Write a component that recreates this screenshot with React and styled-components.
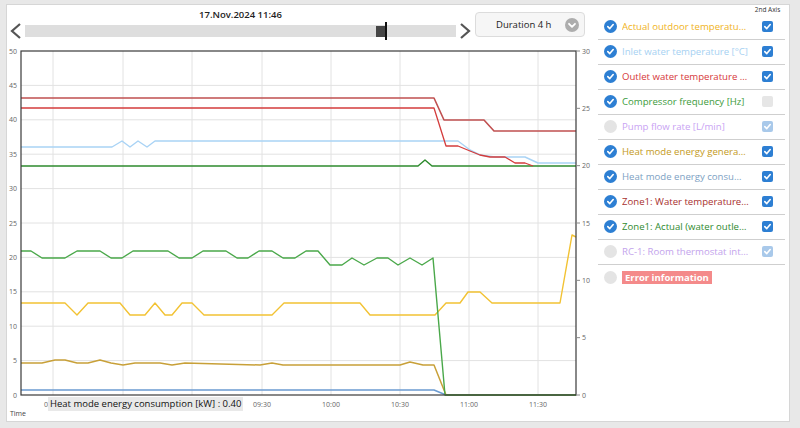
import React from "react";
import styled, { createGlobalStyle } from "styled-components";

const GlobalStyle = createGlobalStyle`
  html, body { margin: 0; padding: 0; background: #e8e8e8; }
  body { font-family: "Open Sans", "Noto Sans", sans-serif; }
`;

const Page = styled.div`
  width: 800px;
  height: 428px;
  box-sizing: border-box;
  padding: 4px 10px 6px 6px;
`;

const Panel = styled.div`
  height: 418px;
  box-sizing: border-box;
  border: 1px solid #d6d6d6;
  background: #fff;
  display: flex;
`;

const ChartColumn = styled.div`
  width: 590px;
  display: flex;
  flex-direction: column;
`;

const Header = styled.div`
  height: 39px;
  box-sizing: border-box;
  padding: 3px 0 0 2px;
  display: flex;
  align-items: flex-start;
`;

const TimeControl = styled.div`
  width: 463px;
  display: flex;
  flex-direction: column;
`;

const DateLabel = styled.div`
  height: 14px;
  line-height: 14px;
  text-align: center;
  font-size: 9.5px;
  font-weight: 600;
  color: #222;
`;

const SliderRow = styled.div`
  height: 18px;
  display: flex;
  align-items: center;
  gap: 2px;
`;

const NavButton = styled.div`
  width: 14px;
  height: 18px;
  display: flex;
  align-items: center;
  justify-content: center;
`;

const Track = styled.div`
  flex: 1;
  height: 12px;
  background: #dedede;
  position: relative;
`;

const Thumb = styled.div`
  position: absolute;
  left: 351px;
  top: 1px;
  width: 9px;
  height: 11px;
  background: #464646;
`;

const ThumbLine = styled.div`
  position: absolute;
  left: 360px;
  top: -3px;
  width: 2px;
  height: 18px;
  background: #111;
`;

const Dropdown = styled.div`
  margin: 4px 0 0 3px;
  width: 110px;
  height: 25px;
  box-sizing: border-box;
  border: 1px solid #dcdcdc;
  border-radius: 4px;
  background: #f6f6f6;
  display: flex;
  align-items: center;
  padding: 0 5px 0 20px;
  font-size: 9.5px;
  color: #222;
`;

const DropIcon = styled.svg`
  margin-left: auto;
  width: 14px;
  height: 14px;
`;

const ChartArea = styled.div`
  position: relative;
  flex: 1;
`;

const Tooltip = styled.div`
  position: absolute;
  left: 41px;
  top: 353px;
  height: 14px;
  line-height: 14px;
  padding: 0 2px;
  background: #e9e9e9;
  font-size: 9.5px;
  color: #111;
  white-space: nowrap;
`;

const Legend = styled.div`
  width: 192px;
  box-sizing: border-box;
  padding: 0 4px 0 1px;
  display: flex;
  flex-direction: column;
`;

const LegendHeader = styled.div`
  height: 10px;
  display: grid;
  grid-template-columns: 24px 127px 13px 11px;
`;

const AxisTitleCell = styled.div`
  grid-column: 4;
  display: flex;
  justify-content: center;
  white-space: nowrap;
  font-size: 6.5px;
  line-height: 10px;
  color: #333;
`;

const Row = styled.div`
  height: 25px;
  box-sizing: border-box;
  padding-bottom: 1px;
  border-bottom: ${(p) => (p.$last ? "none" : "1px solid #cfcfcf")};
  display: grid;
  grid-template-columns: 24px 127px 13px 11px;
  align-items: center;
`;

const IconCell = styled.div`
  display: flex;
  justify-content: center;
`;

const Dot = styled.div`
  width: 13px;
  height: 13px;
  border-radius: 50%;
  background: ${(p) => (p.$on ? "#2d7fd3" : "#e4e4e4")};
  display: flex;
  align-items: center;
  justify-content: center;
`;

const Label = styled.div`
  font-size: 9.6px;
  color: ${(p) => p.$color};
  white-space: nowrap;
  overflow: hidden;
  text-overflow: ellipsis;
`;

const ErrorBadge = styled.span`
  justify-self: start;
  background: #f48a8a;
  color: #fff;
  font-weight: 700;
  font-size: 9.5px;
  line-height: 13px;
  padding: 0 3px;
  white-space: nowrap;
`;

const Box = styled.div`
  grid-column: 4;
  width: 11px;
  height: 11px;
  border-radius: 2px;
  background: ${(p) =>
    p.$state === "on" ? "#2d7fd3" : p.$state === "dis" ? "#a9c9ea" : "#e6e6e6"};
  display: flex;
  align-items: center;
  justify-content: center;
`;

const CheckMark = ({ size = 9 }) => (
  <svg width={size} height={size} viewBox="0 0 10 10">
    <polyline points="2,5.2 4.2,7.3 8,2.8" fill="none" stroke="#fff" strokeWidth="1.8" strokeLinecap="round" strokeLinejoin="round" />
  </svg>
);

const Chevron = ({ dir }) => (
  <svg width="12" height="18" viewBox="0 0 12 18">
    <polyline
      points={dir === "left" ? "10,2 2,9 10,16" : "2,2 10,9 2,16"}
      fill="none"
      stroke="#555"
      strokeWidth="2.2"
    />
  </svg>
);

const legendItems = [
  { label: "Actual outdoor temperature [°C]", color: "#f0b323", on: true, box: "on" },
  { label: "Inlet water temperature [°C]", color: "#a6d1f2", on: true, box: "on" },
  { label: "Outlet water temperature [°C]", color: "#d6383a", on: true, box: "on" },
  { label: "Compressor frequency [Hz]", color: "#3c9b3c", on: true, box: "off" },
  { label: "Pump flow rate [L/min]", color: "#c9a3f3", on: false, box: "dis" },
  { label: "Heat mode energy generation [kW]", color: "#c49a22", on: true, box: "on" },
  { label: "Heat mode energy consumption [kW]", color: "#7d9fc3", on: true, box: "on" },
  { label: "Zone1: Water temperature target [°C]", color: "#a8302e", on: true, box: "on" },
  { label: "Zone1: Actual (water outlet) temperature [°C]", color: "#2f8a2f", on: true, box: "on" },
  { label: "RC-1: Room thermostat internal temperature [°C]", color: "#c3a3ec", on: false, box: "dis" },
];

const P = (arr) => arr.map((p) => p.join(",")).join(" ");

const series = [
  { color: "#6b9bd1", w: 1.5, pts: [[21, 390], [434, 390], [446, 395], [576, 395]] },
  {
    color: "#c8a038",
    w: 1.5,
    pts: [[21, 363], [42, 363], [55, 360], [65, 360], [77, 363], [88, 363], [100, 360], [111, 363], [123, 365], [135, 363], [160, 363], [172, 365], [185, 363], [260, 365], [272, 363], [283, 365], [400, 365], [410, 362], [423, 365], [434, 365], [446, 395], [576, 395]],
  },
  {
    color: "#f2c233",
    w: 1.4,
    pts: [[21, 303], [65, 303], [77, 315], [88, 303], [120, 303], [130, 315], [145, 315], [155, 303], [165, 315], [172, 315], [182, 303], [192, 303], [204, 315], [272, 315], [284, 303], [360, 303], [370, 315], [435, 315], [446, 303], [460, 303], [468, 292], [480, 292], [492, 303], [560, 303], [572, 235], [576, 237]],
  },
  {
    color: "#4aa84a",
    w: 1.4,
    pts: [[21, 251], [31, 251], [42, 258], [65, 258], [77, 251], [100, 251], [111, 258], [122, 258], [133, 251], [168, 251], [179, 258], [192, 258], [203, 251], [226, 251], [237, 258], [248, 258], [259, 251], [272, 251], [283, 258], [295, 258], [306, 251], [318, 251], [330, 265], [342, 265], [352, 258], [364, 265], [377, 258], [388, 258], [398, 265], [410, 258], [422, 265], [433, 258], [445, 395], [576, 395]],
  },
  { color: "#2e8b2e", w: 1.5, pts: [[21, 166], [418, 166], [425, 160], [432, 166], [576, 166]] },
  {
    color: "#a9d3f5",
    w: 1.4,
    pts: [[21, 147], [112, 147], [122, 141], [130, 147], [138, 141], [147, 147], [155, 141], [458, 141], [470, 150], [480, 155], [495, 157], [525, 157], [538, 163], [576, 163]],
  },
  {
    color: "#d43c3c",
    w: 1.3,
    pts: [[21, 108], [434, 108], [446, 146], [458, 146], [470, 151], [480, 155], [490, 157], [505, 157], [515, 163], [525, 163], [533, 166]],
  },
  { color: "#c05050", w: 1.6, pts: [[21, 98], [434, 98], [444, 120], [484, 120], [494, 131], [576, 131]] },
];

const gridX = [53, 123, 192, 262, 331, 400, 469, 538];
const xLabels = [
  [53, "08:00"], [262, "09:30"], [331, "10:00"], [400, "10:30"], [469, "11:00"], [538, "11:30"],
];

function Chart() {
  const leftVals = [0, 5, 10, 15, 20, 25, 30, 35, 40, 45, 50];
  const rightVals = [0, 5, 10, 15, 20, 25, 30];
  const ly = (v) => 395 - v * 6.88;
  const ry = (v) => 395 - (v * 344) / 30;
  return (
    <svg width="590" height="377" viewBox="7 44 590 377" style={{ display: "block" }}>
      {leftVals.slice(1, -1).map((v) => (
        <line key={"h" + v} x1="21" x2="576" y1={ly(v)} y2={ly(v)} stroke="#e2e2e2" strokeWidth="1" />
      ))}
      {gridX.map((x) => (
        <line key={"v" + x} x1={x} x2={x} y1="51" y2="395" stroke="#e2e2e2" strokeWidth="1" />
      ))}
      {series.map((s, i) => (
        <polyline key={i} points={P(s.pts)} fill="none" stroke={s.color} strokeWidth={s.w} strokeLinejoin="round" />
      ))}
      <rect x="21" y="51" width="555" height="344" fill="none" stroke="#3a3a3a" strokeWidth="1.2" />
      {rightVals.map((v) => (
        <line key={"rt" + v} x1="576" x2="580" y1={ry(v)} y2={ry(v)} stroke="#888" strokeWidth="1" />
      ))}
      <g fontFamily="Open Sans, sans-serif" fontSize="7" fill="#666">
        {leftVals.map((v) => (
          <text key={"l" + v} x="17" y={ly(v) + 2.5} textAnchor="end">{v}</text>
        ))}
        {rightVals.map((v) => (
          <text key={"r" + v} x="582" y={ry(v) + 2.5}>{v}</text>
        ))}
        {xLabels.map(([x, t]) => (
          <text key={"t" + x} x={x} y="407" textAnchor="middle">{t}</text>
        ))}
        <text x="10" y="416" fill="#444">Time</text>
      </g>
    </svg>
  );
}

export default function App() {
  return (
    <>
      <GlobalStyle />
      <Page>
        <Panel>
          <ChartColumn>
            <Header>
              <TimeControl>
                <DateLabel>17.Nov.2024 11:46</DateLabel>
                <SliderRow>
                  <NavButton><Chevron dir="left" /></NavButton>
                  <Track>
                    <Thumb />
                    <ThumbLine />
                  </Track>
                  <NavButton><Chevron dir="right" /></NavButton>
                </SliderRow>
              </TimeControl>
              <Dropdown>
                Duration 4 h
                <DropIcon viewBox="0 0 14 14">
                  <circle cx="7" cy="7" r="7" fill="#adadad" />
                  <polyline points="4,5.8 7,8.8 10,5.8" fill="none" stroke="#fff" strokeWidth="1.8" strokeLinecap="round" strokeLinejoin="round" />
                </DropIcon>
              </Dropdown>
            </Header>
            <ChartArea>
              <Chart />
              <Tooltip>Heat mode energy consumption [kW] : 0.40</Tooltip>
            </ChartArea>
          </ChartColumn>
          <Legend>
            <LegendHeader>
              <AxisTitleCell>2nd Axis</AxisTitleCell>
            </LegendHeader>
            {legendItems.map((it) => (
              <Row key={it.label}>
                <IconCell>
                  <Dot $on={it.on}>{it.on && <CheckMark size={9} />}</Dot>
                </IconCell>
                <Label $color={it.color}>{it.label}</Label>
                <Box $state={it.box}>{it.box !== "off" && <CheckMark size={9} />}</Box>
              </Row>
            ))}
            <Row $last>
              <IconCell>
                <Dot $on={false} />
              </IconCell>
              <ErrorBadge>Error information</ErrorBadge>
            </Row>
          </Legend>
        </Panel>
      </Page>
    </>
  );
}
